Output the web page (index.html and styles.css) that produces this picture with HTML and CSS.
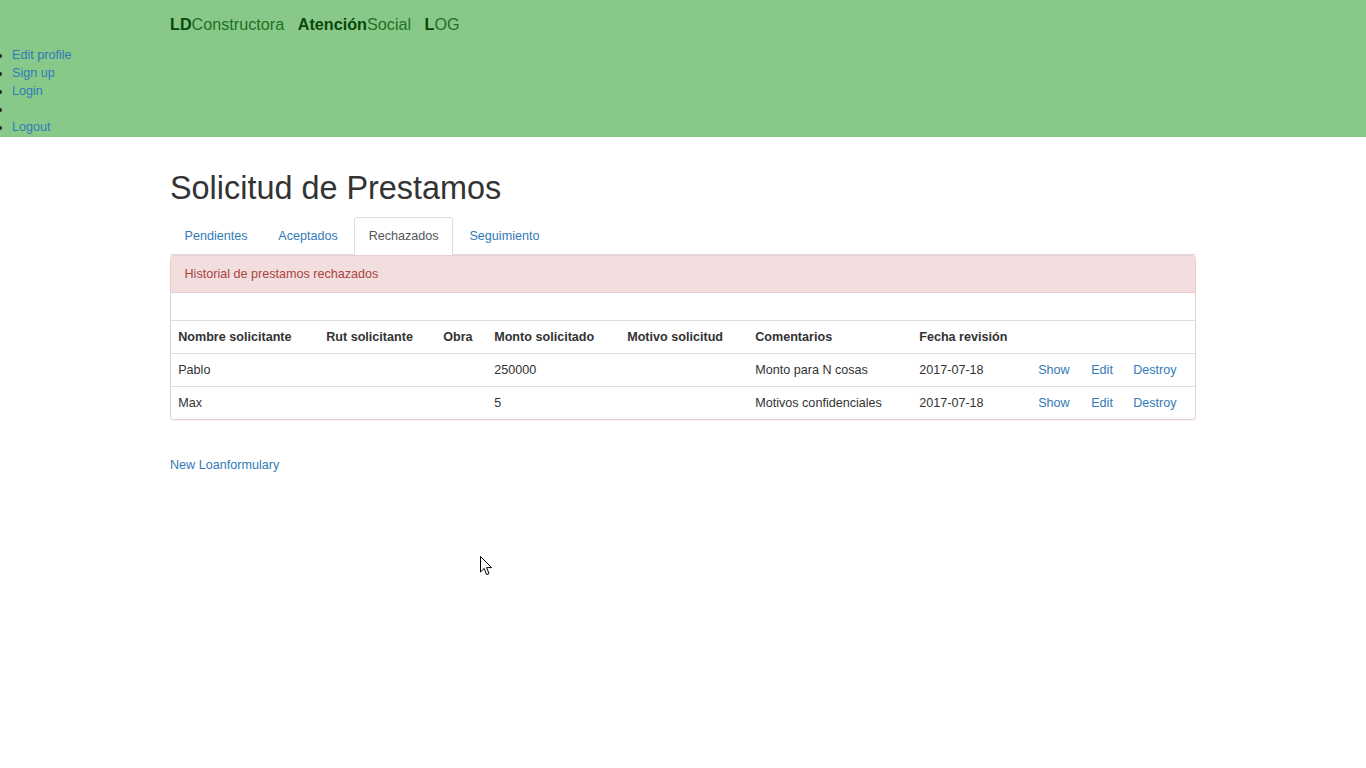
FILE: index.html
```html
<!DOCTYPE html>
<html lang="es">
<head>
<meta charset="utf-8">
<title>Solicitud de Prestamos</title>
<link rel="stylesheet" href="styles.css">
</head>
<body>
<header class="topbar">
  <div class="container brands">
    <a class="brand" href="#"><b>LD</b>Constructora</a>
    <a class="brand" href="#"><b>Atención</b>Social</a>
    <a class="brand" href="#"><b>L</b>OG</a>
  </div>
  <ul class="user-menu">
    <li><a href="#">Edit profile</a></li>
    <li><a href="#">Sign up</a></li>
    <li><a href="#">Login</a></li>
    <li></li>
    <li><a href="#">Logout</a></li>
  </ul>
</header>

<main class="container">
  <h1 class="title">Solicitud de Prestamos</h1>
  <ul class="tabs">
    <li><a href="#">Pendientes</a></li>
    <li><a href="#">Aceptados</a></li>
    <li class="active"><a href="#">Rechazados</a></li>
    <li><a href="#">Seguimiento</a></li>
  </ul>
  <section class="panel">
    <div class="panel-heading">Historial de prestamos rechazados</div>
    <div class="panel-body"></div>
    <table class="table">
      <colgroup>
        <col class="c-nombre"><col class="c-rut"><col class="c-obra"><col class="c-monto"><col class="c-motivo"><col class="c-coment"><col class="c-fecha"><col class="c-show"><col class="c-edit"><col class="c-destroy">
      </colgroup>
      <thead>
        <tr>
          <th>Nombre solicitante</th>
          <th>Rut solicitante</th>
          <th>Obra</th>
          <th>Monto solicitado</th>
          <th>Motivo solicitud</th>
          <th>Comentarios</th>
          <th>Fecha revisión</th>
          <th colspan="3"></th>
        </tr>
      </thead>
      <tbody>
        <tr>
          <td>Pablo</td><td></td><td></td><td>250000</td><td></td>
          <td>Monto para N cosas</td><td>2017-07-18</td>
          <td><a href="#">Show</a></td><td><a href="#">Edit</a></td><td><a href="#">Destroy</a></td>
        </tr>
        <tr>
          <td>Max</td><td></td><td></td><td>5</td><td></td>
          <td>Motivos confidenciales</td><td>2017-07-18</td>
          <td><a href="#">Show</a></td><td><a href="#">Edit</a></td><td><a href="#">Destroy</a></td>
        </tr>
      </tbody>
    </table>
  </section>
  <p class="new-link"><a href="#">New Loanformulary</a></p>
</main>

<svg class="cursor" width="13" height="20" viewBox="0 0 13 20" aria-hidden="true">
  <path d="M0.5 0.5 L0.5 16 L4.2 12.4 L6.6 18.6 L9 17.6 L6.6 11.6 L11.6 11.6 Z" fill="#fff" stroke="#000" stroke-width="1"/>
</svg>
</body>
</html>
```
FILE: styles.css
```css
* { box-sizing: border-box; }

html, body {
  margin: 0;
  padding: 0;
}

body {
  font-family: "Liberation Sans", Arial, Helvetica, sans-serif;
  font-size: 12.6px;
  line-height: 18px;
  color: #333;
  background: #fff;
}

a {
  color: #337ab7;
  text-decoration: none;
}

.container {
  width: 1026px;
  margin: 0 auto;
}

/* Header */
.topbar {
  background: #88c98a;
  height: 137px;
  overflow: hidden;
}

.brands {
  display: flex;
  gap: 13.5px;
  padding-top: 14px;
  font-size: 16.2px;
  line-height: 20px;
}

.brand {
  color: #1f701f;
}

.brand b {
  color: #0a470a;
  font-weight: bold;
}

.user-menu {
  margin: 12px 0 0;
  padding: 0 0 0 12px;
  list-style: disc;
  color: #222;
}

.user-menu li {
  height: 18px;
}

/* Main */
.title {
  margin: 34px 0 10.4px;
  font-size: 32.4px;
  font-weight: 500;
  line-height: 35.64px;
  color: #333;
}

.tabs {
  display: flex;
  margin: 0;
  padding: 0;
  list-style: none;
  border-bottom: 1px solid #ddd;
}

.tabs li {
  margin-bottom: -1px;
  margin-right: 1.8px;
}

.tabs a {
  display: block;
  padding: 9px 13.5px;
  line-height: 18px;
  border: 1px solid transparent;
  border-radius: 3.6px 3.6px 0 0;
}

.tabs .active a {
  color: #555;
  background: #fff;
  border-color: #ddd;
  border-bottom-color: transparent;
}

.panel {
  border: 1px solid #ebccd1;
  border-radius: 3.6px;
  margin-bottom: 36px;
  background: #fff;
  box-shadow: 0 1px 1px rgba(0, 0, 0, 0.05);
}

.panel-heading {
  background: #f2dede;
  color: #a94442;
  padding: 9px 13.5px;
  border-bottom: 1px solid #ebccd1;
  border-radius: 3px 3px 0 0;
}

.panel-body {
  padding: 13.5px;
}

.table {
  width: 100%;
  border-collapse: collapse;
  table-layout: fixed;
  border-top: 1px solid #ddd;
}

.table th,
.table td {
  padding: 7px 7.2px;
  text-align: left;
  line-height: 18px;
  white-space: nowrap;
  vertical-align: top;
}

.table th {
  font-weight: bold;
}

.table tbody td {
  border-top: 1px solid #ddd;
}

.c-nombre { width: 148px; }
.c-rut { width: 117px; }
.c-obra { width: 51px; }
.c-monto { width: 133px; }
.c-motivo { width: 128px; }
.c-coment { width: 164px; }
.c-fecha { width: 119px; }
.c-show { width: 53px; }
.c-edit { width: 42px; }
.c-destroy { width: 69px; }

.new-link {
  margin: 0;
}

.cursor {
  position: absolute;
  left: 480px;
  top: 556px;
}
```
